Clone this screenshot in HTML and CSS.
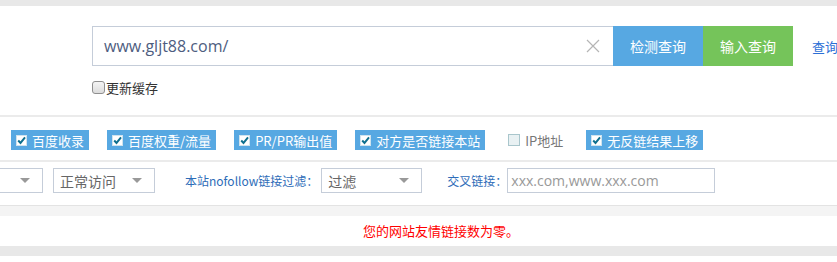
FILE: index.html
```html
<!DOCTYPE html>
<html lang="zh-CN">
<head>
    <meta charset="UTF-8">
    <meta name="viewport" content="width=device-width, initial-scale=1.0">
    <title>友情链接检测</title>
    <link rel="stylesheet" href="styles.css">
</head>
<body>
    <div class="topbar"></div>

    <div class="search">
        <div class="search-row">
            <div class="search-box">
                <span class="search-text">www.gljt88.com/</span>
                <svg class="clear" width="14" height="14" viewBox="0 0 14 14"><path d="M1 1L13 13M13 1L1 13" stroke="#b5b5b5" stroke-width="1.2"/></svg>
            </div>
            <button class="btn btn-blue">检测查询</button>
            <button class="btn btn-green">输入查询</button>
            <a class="search-link" href="#">查询</a>
        </div>
        <label class="cache"><span class="cache-box"></span>更新缓存</label>
    </div>

    <div class="options">
        <label class="opt on"><span class="tick"><svg width="9" height="9" viewBox="0 0 11 11"><path d="M1.5 5.5L4.3 8.5L9.8 1.8" stroke="#0e6f8e" stroke-width="2.4" fill="none"/></svg></span>百度收录</label>
        <label class="opt on"><span class="tick"><svg width="9" height="9" viewBox="0 0 11 11"><path d="M1.5 5.5L4.3 8.5L9.8 1.8" stroke="#0e6f8e" stroke-width="2.4" fill="none"/></svg></span>百度权重/流量</label>
        <label class="opt on"><span class="tick"><svg width="9" height="9" viewBox="0 0 11 11"><path d="M1.5 5.5L4.3 8.5L9.8 1.8" stroke="#0e6f8e" stroke-width="2.4" fill="none"/></svg></span>PR/PR输出值</label>
        <label class="opt on"><span class="tick"><svg width="9" height="9" viewBox="0 0 11 11"><path d="M1.5 5.5L4.3 8.5L9.8 1.8" stroke="#0e6f8e" stroke-width="2.4" fill="none"/></svg></span>对方是否链接本站</label>
        <label class="opt"><span class="tick off"></span>IP地址</label>
        <label class="opt on"><span class="tick"><svg width="9" height="9" viewBox="0 0 11 11"><path d="M1.5 5.5L4.3 8.5L9.8 1.8" stroke="#0e6f8e" stroke-width="2.4" fill="none"/></svg></span>无反链结果上移</label>
    </div>

    <div class="filters">
        <div class="select sel-first"><span></span><i class="arrow"></i></div>
        <div class="select sel-mid"><span>正常访问</span><i class="arrow"></i></div>
        <span class="filter-label">本站nofollow链接过滤：</span>
        <div class="select sel-mid"><span>过滤</span><i class="arrow"></i></div>
        <span class="filter-label cross">交叉链接：</span>
        <div class="cross-input">xxx.com,www.xxx.com</div>
    </div>

    <div class="band"></div>
    <div class="result">您的网站友情链接数为零。</div>
    <div class="band dark"></div>
</body>
</html>
```

FILE: styles.css
```css
body {
    margin: 0;
    padding: 0;
    background: #fff;
    font-family: "Noto Sans CJK SC", "Microsoft YaHei", sans-serif;
    font-size: 14px;
    overflow: hidden;
}

.topbar {
    height: 6px;
    background-color: #e8e8e8;
}

.search {
    padding: 20px 0 0 92px;
    height: 89px;
    border-bottom: 2px solid #ebebeb;
}

.search-row {
    display: flex;
    align-items: center;
}

.search-row > * {
    flex-shrink: 0;
}

.search-box {
    box-sizing: border-box;
    width: 521px;
    height: 40px;
    border: 1px solid #c5cdd9;
    border-right: none;
    display: flex;
    align-items: center;
    justify-content: space-between;
    padding: 0 13px 0 11px;
}

.search-text {
    font-family: "Open Sans", "Noto Sans", sans-serif;
    font-size: 16px;
    color: #4e5d80;
}

.btn {
    width: 90px;
    height: 40px;
    border: none;
    padding: 0;
    color: #fff;
    font-family: inherit;
    font-size: 14px;
    cursor: pointer;
}

.btn-blue {
    background-color: #57a8e2;
}

.btn-green {
    background-color: #75c45a;
}

.search-link {
    margin-left: 19px;
    white-space: nowrap;
    color: #2c6fd6;
    text-decoration: none;
    font-size: 13px;
}

.cache {
    display: flex;
    align-items: center;
    margin-top: 12px;
    font-size: 13px;
    color: #333;
}

.cache-box {
    box-sizing: border-box;
    width: 13px;
    height: 13px;
    border: 1px solid #8f8f8f;
    border-radius: 3px;
    background: linear-gradient(#f4f4f4, #dcdcdc);
    margin-right: 1px;
}

.options {
    display: flex;
    align-items: center;
    gap: 18px;
    padding: 13px 0 10px 11px;
    border-bottom: 2px solid #ebebeb;
}

.opt {
    display: flex;
    align-items: center;
    height: 20px;
    padding: 0 5px;
    font-size: 13px;
    color: #777;
    white-space: nowrap;
}

.opt.on {
    background-color: #57a8e2;
    color: #fff;
}

.tick {
    box-sizing: border-box;
    width: 11px;
    height: 11px;
    background: #fff;
    border: 1px solid #cfe3ee;
    margin-right: 5px;
    display: flex;
    align-items: center;
    justify-content: center;
}

.tick.off {
    width: 12px;
    height: 12px;
    background: #e9f1f3;
    border-color: #a9c6cc;
}

.filters {
    display: flex;
    align-items: center;
    margin-left: -60px;
    padding: 6px 0 12px;
    height: 25px;
    border-bottom: 1px solid #e3e3e3;
}

.filters > * {
    flex-shrink: 0;
}

.select {
    box-sizing: border-box;
    height: 25px;
    border: 1px solid #c5cdd9;
    display: flex;
    align-items: center;
    justify-content: space-between;
    padding: 0 12px 0 6px;
    color: #666;
    font-size: 14px;
}

.sel-first {
    width: 103px;
}

.sel-mid {
    width: 102px;
    margin-left: 10px;
}

.arrow {
    width: 0;
    height: 0;
    border-left: 5px solid transparent;
    border-right: 5px solid transparent;
    border-top: 5px solid #999;
}

.filter-label {
    margin-left: 30px;
    color: #2e6cb8;
    font-size: 12px;
    white-space: nowrap;
}

.filter-label + .select {
    margin-left: 3px;
    width: 101px;
}

.filter-label.cross {
    margin-left: 25px;
}

.cross-input {
    box-sizing: border-box;
    width: 208px;
    height: 25px;
    margin-left: 0;
    border: 1px solid #c5cdd9;
    padding-left: 3px;
    display: flex;
    align-items: center;
    font-family: "Open Sans", "Noto Sans", sans-serif;
    font-size: 14px;
    color: #999;
}

.band {
    height: 10px;
    background-color: #f4f4f4;
}

.band.dark {
    background-color: #e8e8e8;
}

.result {
    height: 30px;
    line-height: 30px;
    padding-left: 363px;
    color: #f00;
    font-size: 13px;
}
```
